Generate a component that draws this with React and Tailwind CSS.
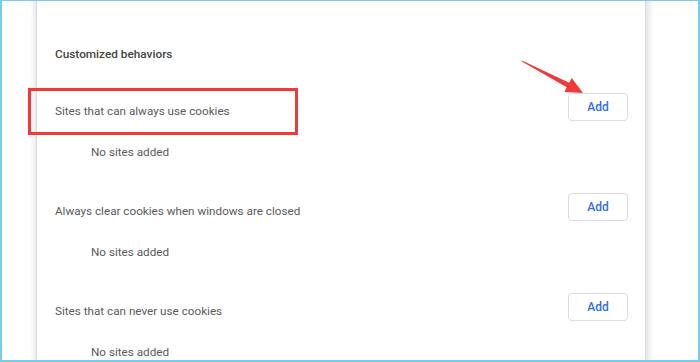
export default function App() {
  const sections = [
    "Sites that can always use cookies",
    "Always clear cookies when windows are closed",
    "Sites that can never use cookies",
  ];
  return (
    <div
      className="relative w-[700px] h-[362px] overflow-hidden bg-white border-t border-l-2 border-r-2 border-b-2 border-[#74cdf0] flex"
      style={{ fontFamily: "Roboto, 'Noto Sans', sans-serif" }}
    >
      <div className="w-[28px] shrink-0" />
      <div className="w-[6px] shrink-0 bg-gradient-to-r from-white to-[#ececec]" />
      <div className="w-[610px] shrink-0 bg-white border-l border-r border-[#dcdcdc] pt-[43px] pl-[18px] pr-[17px]">
        <div className="text-[11.8px] leading-[20px] font-medium text-[#444]">
          Customized behaviors
        </div>
        <div className="mt-[29px]">
          {sections.map((s, i) => (
            <div key={i} className={i === 0 ? "" : "mt-[31px]"}>
              <div className="flex justify-between items-start h-[28px]">
                <span className="mt-[8px] text-[11.7px] leading-[20px] text-[#5a5a5a]">{s}</span>
                <button className="h-[28px] w-[60px] rounded-[4px] border border-[#dadce0] bg-white text-[12px] font-medium text-[#2f6fe0]">
                  Add
                </button>
              </div>
              <div className="mt-[21px] h-[20px] pl-[36px] text-[11.7px] leading-[20px] text-[#5a5a5a]">
                No sites added
              </div>
            </div>
          ))}
        </div>
      </div>
      <div className="w-[8px] shrink-0 bg-gradient-to-r from-[#e6e6e6] to-white" />
      <div className="flex-1" />

      <div className="absolute left-[26px] top-[87px] w-[270px] h-[47px] border-[3px] border-[#f03a3a]" />
      <svg className="absolute left-0 top-0" width="700" height="362" viewBox="0 0 700 362">
        <polygon
          points="520,59.6 567.2,81.8 569.7,76.9 581,92 562.3,91.1 564.8,86.2 519.8,60.4"
          fill="#f03a3a"
        />
      </svg>
    </div>
  );
}
